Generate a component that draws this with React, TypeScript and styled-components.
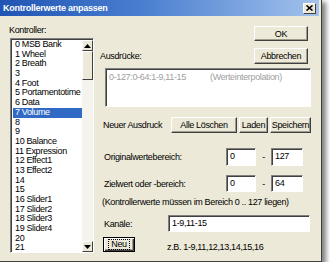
import React from 'react';
import styled, { createGlobalStyle } from 'styled-components';

const GlobalStyle = createGlobalStyle`
  body {
    margin: 0;
    background: #fff;
    font-family: "Liberation Sans", Arial, sans-serif;
    font-size: 9px;
    letter-spacing: -0.35px;
    color: #000;
  }
`;

const Dialog = styled.div`
  width: 321px;
  height: 261px;
  background: #ece9d8;
  border-right: 1px solid #404040;
  border-bottom: 1px solid #404040;
  box-shadow: 3px 3px 5px 1px rgba(0, 0, 0, 0.5);
  display: flex;
  flex-direction: column;
`;

const TitleBar = styled.div`
  height: 16px;
  margin-right: 2px;
  background: linear-gradient(to right, #1f54b4 0%, #4a7fd0 45%, #a3c2ec 100%);
  display: flex;
  align-items: center;
  justify-content: space-between;
  padding-left: 3px;
  color: #fff;
  font-weight: bold;
  letter-spacing: -0.25px;
`;

const CloseBox = styled.div`
  width: 11px;
  height: 9px;
  margin-right: 3px;
  background: #ece9d8;
  border: 1px solid;
  border-color: #fff #404040 #404040 #fff;
  display: flex;
  align-items: center;
  justify-content: center;
`;

const Body = styled.div`
  display: flex;
  flex: 1;
`;

const LeftCol = styled.div`
  margin-left: 9px;
  padding-top: 9px;
  display: flex;
  flex-direction: column;
`;

const Label = styled.div<{ $mb?: number }>`
  line-height: 10px;
  white-space: nowrap;
  margin-bottom: ${p => p.$mb ?? 0}px;
`;

const ListBox = styled.div`
  margin-top: 3px;
  margin-left: 1px;
  width: 84px;
  height: 215px;
  box-sizing: border-box;
  border: 1px solid;
  border-color: #808080 #fff #fff #808080;
  box-shadow: inset 1px 1px #404040;
  background: #fff;
  display: flex;
  overflow: hidden;
`;

const Items = styled.div`
  flex: 1;
  padding: 1px 0 0 2px;
  overflow: hidden;
`;

const Item = styled.div<{ $selected?: boolean }>`
  height: 9.7px;
  line-height: 9.7px;
  padding-left: 2px;
  white-space: nowrap;
  background: ${p => (p.$selected ? '#316ac5' : 'transparent')};
  color: ${p => (p.$selected ? '#fff' : '#000')};
`;

const ScrollBar = styled.div`
  width: 11px;
  margin-top: 1px;
  background: #f4f3ee;
  display: flex;
  flex-direction: column;
`;

const ScrollBtn = styled.div`
  height: 11px;
  box-sizing: border-box;
  background: #ece9d8;
  border: 1px solid;
  border-color: #fff #404040 #404040 #fff;
  display: flex;
  align-items: center;
  justify-content: center;
`;

const Thumb = styled.div`
  height: 29px;
  box-sizing: border-box;
  background: #ece9d8;
  border: 1px solid;
  border-color: #fff #404040 #404040 #fff;
`;

const Track = styled.div`
  flex: 1;
`;

const RightCol = styled.div`
  margin-left: 6px;
  width: 213px;
  padding-top: 10px;
  display: flex;
  flex-direction: column;
`;

const Header = styled.div`
  display: flex;
  align-items: flex-end;
  justify-content: space-between;
  padding-right: 5px;
`;

const ButtonStack = styled.div`
  display: flex;
  flex-direction: column;
  gap: 7px;
`;

const Button = styled.div<{ $w: number; $h?: number; $ml?: number }>`
  width: ${p => p.$w}px;
  height: ${p => p.$h ?? 16}px;
  margin-left: ${p => p.$ml ?? 0}px;
  box-sizing: border-box;
  background: #ece9d8;
  border: 1px solid;
  border-color: #fff #404040 #404040 #fff;
  box-shadow: inset -1px -1px #a09d90;
  display: flex;
  align-items: center;
  justify-content: center;
  white-space: nowrap;
`;

const DefaultButton = styled(Button)`
  border: 1px solid #000;
  box-shadow: inset 1px 1px #fff, inset -1px -1px #404040, inset -2px -2px #a09d90;
  & > span {
    outline: 1px dotted #000;
    padding: 0 2px;
    line-height: 9px;
  }
`;

const ExprBox = styled.div`
  margin: 4px 0 0 5px;
  width: 206px;
  height: 39px;
  box-sizing: border-box;
  border: 1px solid;
  border-color: #808080 #fff #fff #808080;
  box-shadow: inset 1px 1px #404040;
  background: #fff;
  padding: 3px 0 0 3px;
  display: flex;
  color: #a0a0a0;
  line-height: 10px;
`;

const ExprCol = styled.div<{ $w?: number }>`
  width: ${p => (p.$w ? `${p.$w}px` : 'auto')};
  white-space: nowrap;
`;

const Row = styled.div<{ $mt: number }>`
  display: flex;
  align-items: center;
  margin-top: ${p => p.$mt}px;
`;

const RowLabel = styled.div<{ $w: number; $ml?: number }>`
  width: ${p => p.$w}px;
  margin-left: ${p => p.$ml ?? 4}px;
  white-space: nowrap;
  line-height: 10px;
`;

const BtnGroup = styled.div`
  display: flex;
  gap: 2px;
`;

const Input = styled.div<{ $w: number; $h?: number }>`
  width: ${p => p.$w}px;
  height: ${p => p.$h ?? 18}px;
  box-sizing: border-box;
  border: 1px solid;
  border-color: #808080 #fff #fff #808080;
  box-shadow: inset 1px 1px #404040;
  background: #fff;
  padding: 2px 0 0 3px;
  line-height: 11px;
  white-space: nowrap;
`;

const Dash = styled.div`
  width: 15px;
  text-align: center;
`;

const Hint = styled.div`
  margin-top: 5px;
  margin-left: 2px;
  line-height: 10px;
  white-space: nowrap;
`;

const Example = styled.div`
  margin: 5px 0 0 32px;
  white-space: nowrap;
  line-height: 10px;
`;

const Arrow = ({ down }: { down?: boolean }) => (
  <svg width="7" height="4" viewBox="0 0 7 4">
    <polygon points={down ? '0,0 7,0 3.5,4' : '0,4 7,4 3.5,0'} fill="#000" />
  </svg>
);

const controllers = [
  '0 MSB Bank', '1 Wheel', '2 Breath', '3', '4 Foot', '5 Portamentotime', '6 Data', '7 Volume',
  '8', '9', '10 Balance', '11 Expression', '12 Effect1', '13 Effect2', '14', '15',
  '16 Slider1', '17 Slider2', '18 Slider3', '19 Slider4', '20', '21',
];

export default function App() {
  return (
    <>
      <GlobalStyle />
      <Dialog>
        <TitleBar>
          <span>Kontrollerwerte anpassen</span>
          <CloseBox>
            <svg width="7" height="6" viewBox="0 0 7 6">
              <path d="M0.5 0.5 L6.5 5.5 M6.5 0.5 L0.5 5.5" stroke="#000" strokeWidth="1.6" />
            </svg>
          </CloseBox>
        </TitleBar>
        <Body>
          <LeftCol>
            <Label>Kontroller:</Label>
            <ListBox>
              <Items>
                {controllers.map((c, i) => (
                  <Item key={c + i} $selected={i === 7}>{c}</Item>
                ))}
              </Items>
              <ScrollBar>
                <ScrollBtn><Arrow /></ScrollBtn>
                <Thumb />
                <Track />
                <ScrollBtn><Arrow down /></ScrollBtn>
              </ScrollBar>
            </ListBox>
          </LeftCol>
          <RightCol>
            <Header>
              <Label $mb={3}>Ausdrücke:</Label>
              <ButtonStack>
                <Button $w={54} $h={15}>OK</Button>
                <Button $w={54}>Abbrechen</Button>
              </ButtonStack>
            </Header>
            <ExprBox>
              <ExprCol $w={101}>0-127:0-64:1-9,11-15</ExprCol>
              <ExprCol>(Werteinterpolation)</ExprCol>
            </ExprBox>
            <Row $mt={10}>
              <RowLabel $w={68} $ml={3}>Neuer Ausdruck</RowLabel>
              <BtnGroup>
                <Button $w={66}>Alle Löschen</Button>
                <Button $w={29}>Laden</Button>
                <Button $w={41}>Speichern</Button>
              </BtnGroup>
            </Row>
            <Row $mt={15}>
              <RowLabel $w={122}>Originalwertebereich:</RowLabel>
              <Input $w={30}>0</Input>
              <Dash>-</Dash>
              <Input $w={32}>127</Input>
            </Row>
            <Row $mt={9}>
              <RowLabel $w={122}>Zielwert oder -bereich:</RowLabel>
              <Input $w={30} $h={17}>0</Input>
              <Dash>-</Dash>
              <Input $w={32} $h={17}>64</Input>
            </Row>
            <Hint>(Kontrollerwerte müssen im Bereich 0 .. 127 liegen)</Hint>
            <Row $mt={8}>
              <RowLabel $w={64}>Kanäle:</RowLabel>
              <Input $w={142} $h={17}>1-9,11-15</Input>
            </Row>
            <Row $mt={5}>
              <DefaultButton $w={32} $h={15} $ml={3}>
                <span>Neu</span>
              </DefaultButton>
              <Example>z.B. 1-9,11,12,13,14,15,16</Example>
            </Row>
          </RightCol>
        </Body>
      </Dialog>
    </>
  );
}
